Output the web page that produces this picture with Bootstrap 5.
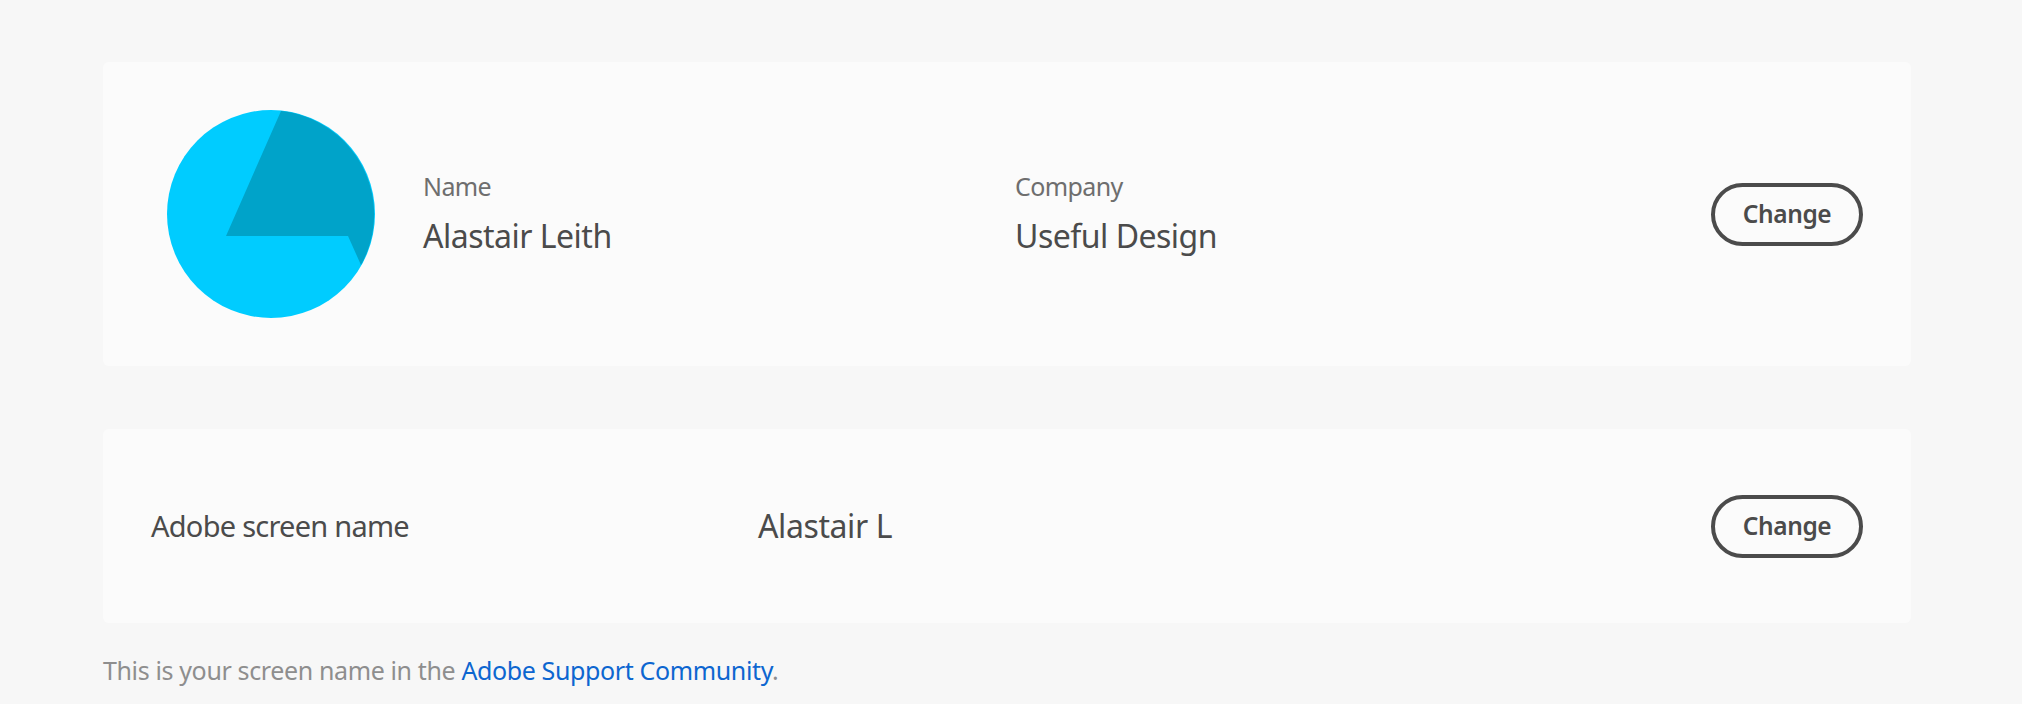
<!doctype html>
<html lang="en">
<head>
<meta charset="utf-8">
<title>Profile</title>
<link href="https://cdn.jsdelivr.net/npm/bootstrap@5.3.0/dist/css/bootstrap.min.css" rel="stylesheet">
<style>
html, body { background: #f7f7f7; }
body { font-family: "Noto Sans", "Open Sans", sans-serif; color: #4b4b4b; height: 704px; overflow: hidden; }
.page-wrap { padding: 62px 111px 0 103px; }
.panel { background: #fbfbfb; border-radius: 6px; padding-right: 48px; }
.panel-profile { height: 304px; padding-left: 64px; margin-bottom: 63px; }
.panel-screen { height: 194px; padding-left: 48px; }
.avatar { width: 208px; height: 208px; flex: none; margin-right: 48px; display: block; }
.field-name { width: 592px; flex: none; padding-bottom: 4px; }
.field-company { flex: 1 1 auto; padding-bottom: 4px; }
.field-label { font-size: 25px; line-height: 30px; color: #6e6e6e; letter-spacing: -.6px; margin-bottom: 17px; }
.field-value { font-size: 32px; line-height: 36px; letter-spacing: -.5px; }
.screen-label { width: 607px; flex: none; font-size: 29px; letter-spacing: -.75px; line-height: 36px; }
.screen-value { flex: 1 1 auto; font-size: 32px; letter-spacing: -.4px; line-height: 36px; }
.btn-change { width: 152px; height: 63px; flex: none; padding: 0; border: 4px solid #4b4b4b; border-radius: 32px; background: transparent; color: #4b4b4b; font-size: 24.5px; font-weight: 600; letter-spacing: -.4px; line-height: 1; }
.btn-change:hover { background: #4b4b4b; color: #fff; border-color: #4b4b4b; }
.note { margin: 30px 0 0; font-size: 25px; line-height: 34px; color: #8e8e8e; letter-spacing: -.37px; }
.note a { color: #0d66d0; text-decoration: none; }
</style>
</head>
<body>
<main class="page-wrap">
  <section class="panel panel-profile d-flex align-items-center">
    <svg class="avatar" viewBox="0 0 208 208" role="img" aria-label="Avatar">
      <circle cx="104" cy="104" r="104" fill="#00ccff"/>
      <path d="M114 1 A104 104 0 0 1 194 155 L181 126 H59 Z" fill="#00a3c9"/>
    </svg>
    <div class="field-name">
      <div class="field-label">Name</div>
      <div class="field-value">Alastair Leith</div>
    </div>
    <div class="field-company">
      <div class="field-label">Company</div>
      <div class="field-value">Useful Design</div>
    </div>
    <button type="button" class="btn btn-change">Change</button>
  </section>
  <section class="panel panel-screen d-flex align-items-center">
    <div class="screen-label">Adobe screen name</div>
    <div class="screen-value">Alastair L</div>
    <button type="button" class="btn btn-change">Change</button>
  </section>
  <p class="note">This is your screen name in the <a href="#">Adobe Support Community</a>.</p>
</main>
<script src="https://cdn.jsdelivr.net/npm/bootstrap@5.3.0/dist/js/bootstrap.bundle.min.js"></script>
</body>
</html>
